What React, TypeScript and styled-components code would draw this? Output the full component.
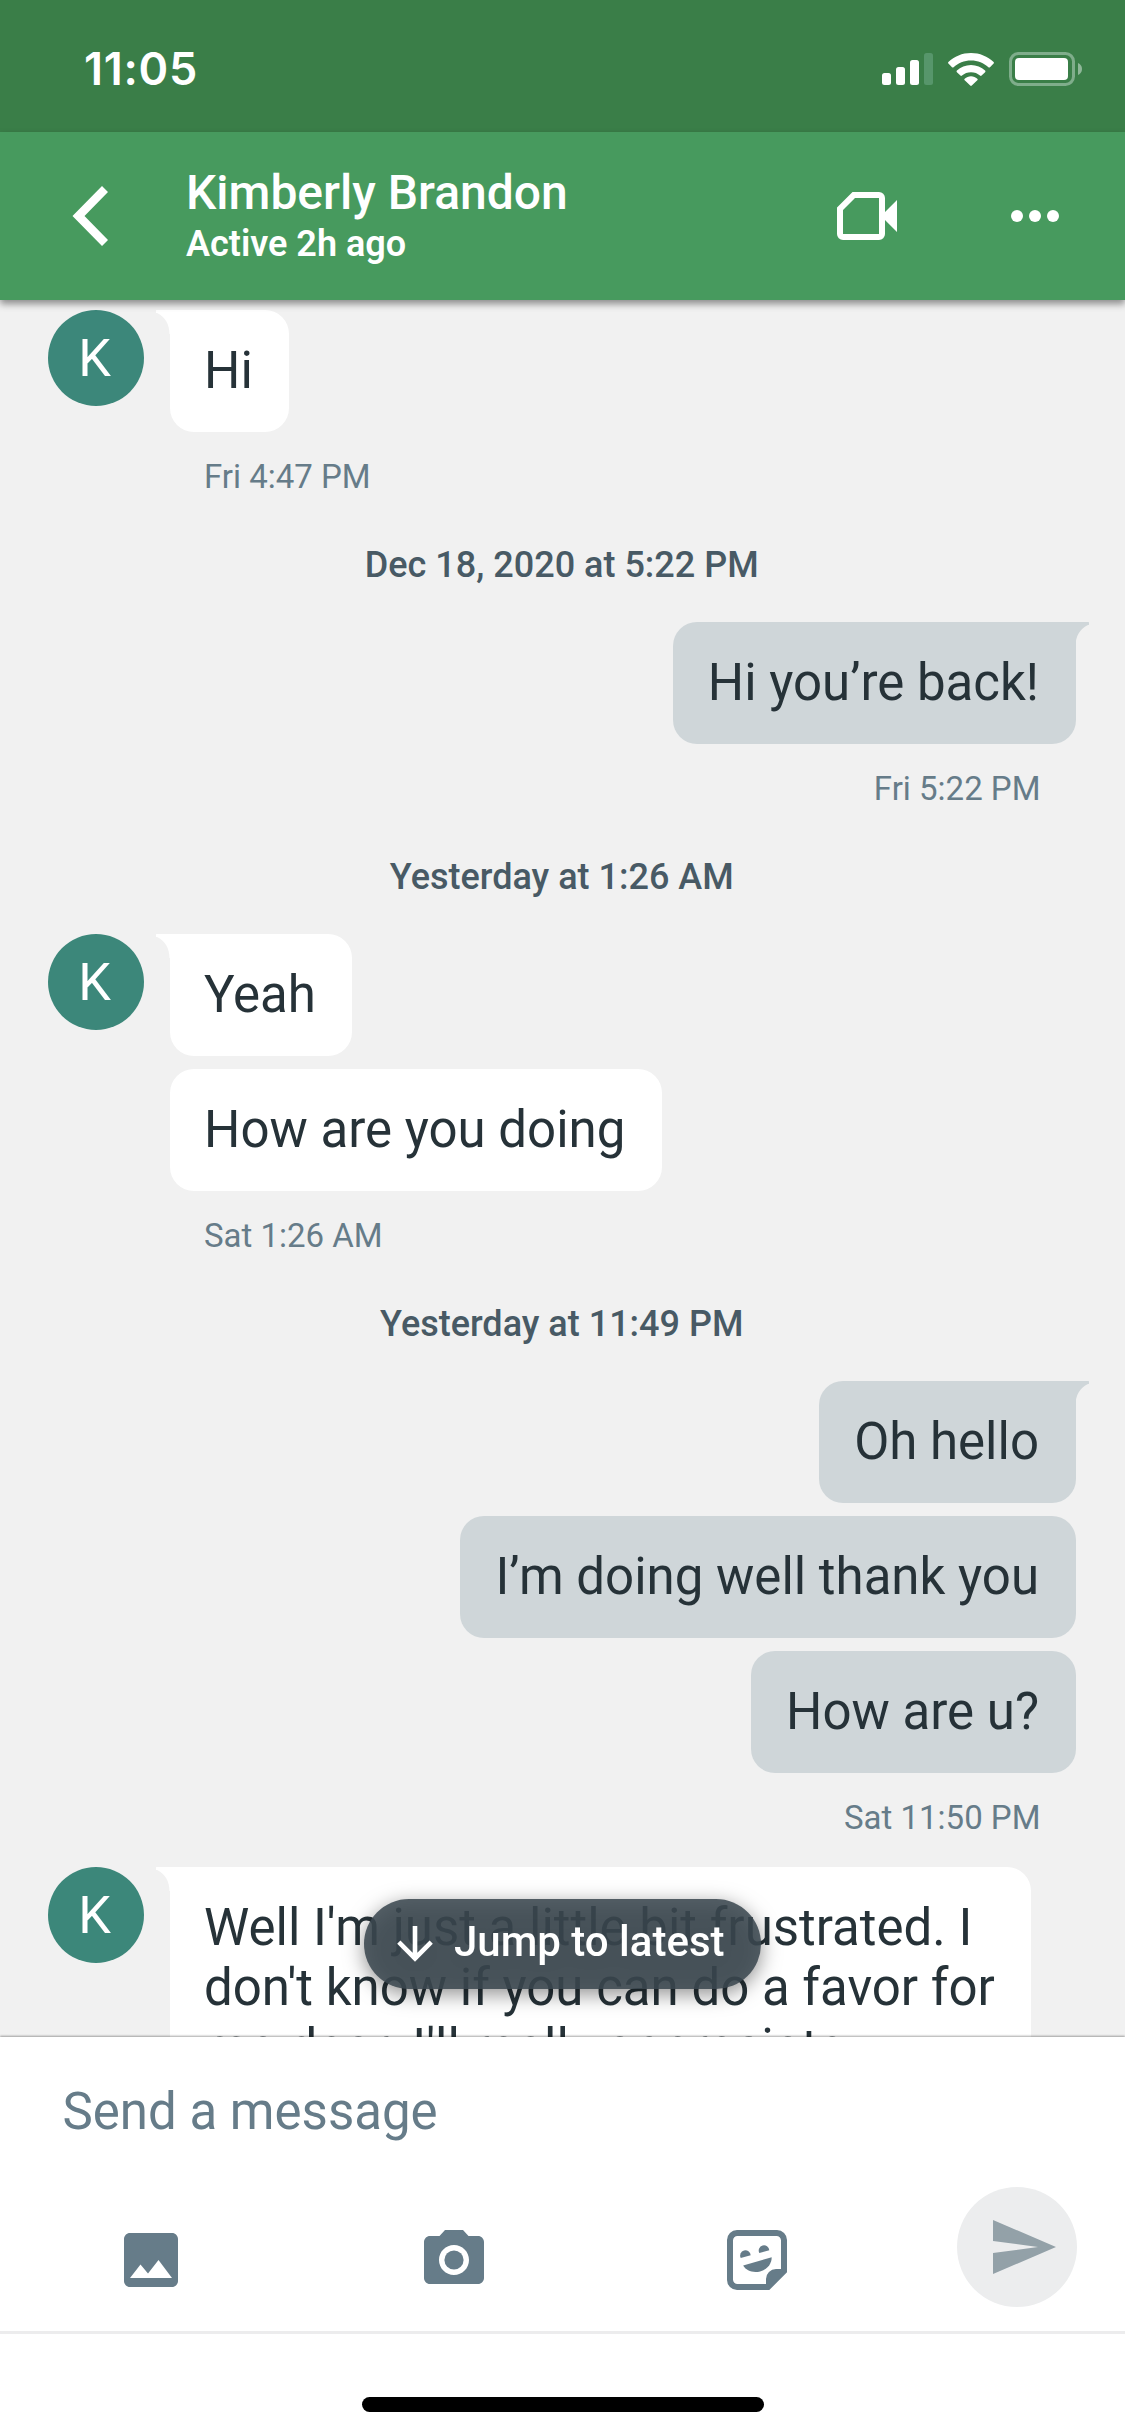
import React from "react";
import styled, { createGlobalStyle, css } from "styled-components";

const GlobalStyle = createGlobalStyle`
  *, *::before, *::after { box-sizing: border-box; }
  html, body { margin: 0; padding: 0; }
  body { width: 1125px; height: 2436px; overflow: hidden; background: #fff; }
  button, input { font: inherit; border: 0; padding: 0; margin: 0; background: none; }
  svg { display: block; flex: none; }
`;

const Screen = styled.div`
  width: 1125px;
  height: 2436px;
  display: flex;
  flex-direction: column;
  overflow: hidden;
  background: #fff;
  font-family: Roboto, "Liberation Sans", sans-serif;
`;

const StatusBar = styled.header`
  flex: none;
  height: 132px;
  padding: 6px 43px 0 84px;
  display: flex;
  align-items: center;
  justify-content: space-between;
  background: #3a7e48;
`;

const Clock = styled.time`
  color: #fff;
  font-family: Inter, Roboto, sans-serif;
  font-weight: 600;
  font-size: 45px;
  line-height: 54px;
  letter-spacing: 0.7px;
`;

const StatusIcons = styled.div`
  display: flex;
  align-items: center;
  gap: 15px;
`;

const ChatHeader = styled.div`
  position: relative;
  z-index: 2;
  flex: none;
  height: 168px;
  padding: 0 66px 0 72px;
  display: flex;
  align-items: center;
  background: #479a5e;
  box-shadow: 0 4px 7px rgba(0, 0, 0, 0.42);
`;

const IconButton = styled.button`
  display: flex;
  flex: none;
`;

const Contact = styled.div`
  flex: 1;
  margin-left: 78px;
  color: #fff;
`;

const ContactName = styled.h1`
  margin: 0;
  font-size: 48px;
  font-weight: 500;
  line-height: 56px;
`;

const ContactStatus = styled.p`
  margin: 0;
  font-size: 36px;
  font-weight: 600;
  line-height: 46px;
`;

const HeaderActions = styled.div`
  display: flex;
  align-items: center;
  gap: 114px;
`;

const Thread = styled.main`
  position: relative;
  flex: none;
  height: 1737px;
  padding: 10px 49.5px 0 48px;
  overflow: hidden;
  background: #f1f1f1;
`;

const Group = styled.section<{ $mine?: boolean }>`
  display: flex;
  align-items: flex-start;
  justify-content: ${(p) => (p.$mine ? "flex-end" : "flex-start")};
`;

const Avatar = styled.div`
  flex: none;
  width: 96px;
  height: 96px;
  margin-right: 25.5px;
  padding: 2px 3px 0 0;
  border-radius: 50%;
  display: flex;
  align-items: center;
  justify-content: center;
  background: #3c877a;
  color: #fff;
  font-size: 52px;
  line-height: 60px;
`;

const Stack = styled.div<{ $mine?: boolean }>`
  display: flex;
  flex-direction: column;
  align-items: ${(p) => (p.$mine ? "flex-end" : "flex-start")};
  gap: 13.5px;
`;

const BubbleBox = styled.div<{ $mine?: boolean; $first?: boolean }>`
  position: relative;
  max-width: 861px;
  padding: 30.6px 36.5px 30.5px ${(p) => (p.$mine ? "35px" : "34.5px")};
  border-radius: 24px;
  background: ${(p) => (p.$mine ? "#cfd6d9" : "#fff")};
  color: #263238;
  font-size: 51px;
  line-height: 60.4px;
  white-space: pre;
  ${(p) =>
    p.$first &&
    (p.$mine
      ? css`border-top-right-radius: 0;`
      : css`border-top-left-radius: 0;`)}
`;

const Tail = styled.svg<{ $mine?: boolean }>`
  position: absolute;
  top: 0;
  ${(p) => (p.$mine ? "right: -13.5px; transform: scaleX(-1);" : "left: -13.5px;")}
  fill: ${(p) => (p.$mine ? "#cfd6d9" : "#fff")};
`;

const SentAt = styled.div`
  height: 81px;
  padding: 12px 35px 0 34.5px;
  color: #667c89;
  font-size: 33px;
  line-height: 39px;
`;

const DayDivider = styled.div`
  height: 96px;
  padding-top: 18px;
  text-align: center;
  color: #485a65;
  font-size: 36px;
  font-weight: 500;
  line-height: 42px;
`;

const JumpButton = styled.button`
  position: absolute;
  left: 364px;
  top: 1599px;
  width: 397px;
  height: 90px;
  padding: 0 0 1px 33px;
  border-radius: 45px;
  display: flex;
  align-items: center;
  gap: 21px;
  background: rgba(60, 72, 80, 0.87);
  filter: drop-shadow(0 5px 10px rgba(0, 0, 0, 0.5));
  color: #fff;
  font-size: 42px;
  font-weight: 500;
  line-height: 48px;
  white-space: nowrap;
`;

const JumpLabel = styled.span`
  margin-top: -3px;
`;

const Composer = styled.section`
  position: relative;
  z-index: 1;
  flex: none;
  height: 297px;
  display: flex;
  flex-direction: column;
  background: #fff;
  border-bottom: 3px solid #ececed;
  box-shadow: 0 -1px 2px rgba(0, 0, 0, 0.35);
`;

const MessageField = styled.div`
  height: 150px;
  padding: 45px 62.5px 0;
  color: #667c89;
  font-size: 51px;
  line-height: 60px;
`;

const Toolbar = styled.div`
  display: flex;
  height: 144px;
`;

const Tools = styled.div`
  flex: none;
  width: 909px;
  display: grid;
  grid-template-columns: repeat(3, 303px);
  justify-items: center;
  align-content: start;
  padding-top: 37px;
  margin-left: -0.5px;
`;

const SendSlot = styled.div`
  flex: 1;
  display: flex;
  justify-content: center;
`;

const SendButton = styled.button`
  width: 120px;
  height: 120px;
  border-radius: 50%;
  display: flex;
  align-items: center;
  padding: 0 0 0 30px;
  background: #ecedee;
`;

const HomeArea = styled.footer`
  position: relative;
  z-index: 1;
  flex: 1;
  display: flex;
  justify-content: center;
  align-items: flex-end;
  padding-bottom: 24px;
  background: #fff;
`;

const HomeBar = styled.div`
  width: 402px;
  height: 15px;
  border-radius: 8px;
  background: #000;
`;

const SignalIcon = () => (
  <svg width="51" height="32" viewBox="0 0 51 32" fill="#fff">
    <rect x="0" y="20" width="9" height="12" rx="2.5" />
    <rect x="14" y="14" width="9" height="18" rx="2.5" />
    <rect x="28" y="7" width="9" height="25" rx="2.5" />
    <rect x="42" y="0" width="9" height="32" rx="2.5" fill="#57966b" />
  </svg>
);

const WifiIcon = () => (
  <svg width="46" height="33" viewBox="0 0 46 33" fill="#fff">
    <path d="M23 0C14.300 0 6.300 3.400.4 9a1.200 1.200 0 0 0 0 1.600L4 14.200a1.200 1.200 0 0 0 1.600 0C10.100 9.800 16.200 7.400 23 7.400s12.900 2.400 17.400 6.800a1.200 1.200 0 0 0 1.600 0l3.600-3.600a1.200 1.200 0 0 0 0-1.600C39.700 3.400 31.700 0 23 0Z" />
    <path d="M23 12c-5.400 0-10.400 2.100-14.100 5.500a1.200 1.200 0 0 0 0 1.700l3.500 3.400a1.200 1.200 0 0 0 1.600 0c2.400-2.100 5.500-3.300 9-3.300s6.600 1.200 9 3.300a1.200 1.200 0 0 0 1.600 0l3.500-3.400a1.200 1.200 0 0 0 0-1.700C33.400 14.100 28.400 12 23 12Z" />
    <path d="M23 23.300c-2.400 0-4.600.9-6.300 2.400a1.100 1.100 0 0 0 0 1.600l5.500 5.300a1.200 1.200 0 0 0 1.600 0l5.500-5.300a1.100 1.100 0 0 0 0-1.600c-1.700-1.500-3.900-2.400-6.300-2.400Z" />
  </svg>
);

const BatteryIcon = () => (
  <svg width="73" height="34" viewBox="0 0 73 34">
    <rect x="1.500" y="1.500" width="63" height="31" rx="8" fill="none" stroke="#7fad8b" strokeWidth="3" />
    <rect x="6" y="6" width="53" height="22" rx="4" fill="#fff" />
    <path d="M69 11c2.600 1 4 3.400 4 6s-1.400 5-4 6Z" fill="#8fb799" />
  </svg>
);

const BackIcon = () => (
  <svg width="36" height="60" viewBox="0 0 36 60" fill="#fff">
    <path d="M30 0 36 6 12.500 30 36 54 30 60 0.500 30Z" />
  </svg>
);

const VideoIcon = () => (
  <svg width="60" height="48" viewBox="0 0 60 48" fill="#fff">
    <path
      fillRule="evenodd"
      d="M15.500 0H42a6 6 0 0 1 6 6v14L60 8v32L48 28v14a6 6 0 0 1-6 6H6a6 6 0 0 1-6-6V15.500ZM18 6 6 18v24h36V6Z"
    />
  </svg>
);

const MoreIcon = () => (
  <svg width="48" height="12" viewBox="0 0 48 12" fill="#fff">
    <circle cx="6" cy="6" r="6" />
    <circle cx="24" cy="6" r="6" />
    <circle cx="42" cy="6" r="6" />
  </svg>
);

const ArrowDownIcon = () => (
  <svg width="36" height="36" viewBox="0 0 36 36" fill="none" stroke="#fff" strokeWidth="4.600">
    <path d="M18 0V32M1.800 16.200 18 32.400 34.200 16.200" />
  </svg>
);

const PhotoIcon = () => (
  <svg width="72" height="72" viewBox="0 0 24 24" fill="#667c89">
    <path d="M21 19V5c0-1.100-.9-2-2-2H5c-1.100 0-2 .9-2 2v14c0 1.100.9 2 2 2h14c1.100 0 2-.9 2-2zM8.500 13.500l2.500 3.010L14.500 12l4.500 6H5l3.500-4.500z" />
  </svg>
);

const CameraIcon = () => (
  <svg width="72" height="72" viewBox="0 0 24 24" fill="#667c89">
    <circle cx="12" cy="12" r="3.200" />
    <path d="M9 2L7.170 4H4c-1.100 0-2 .9-2 2v12c0 1.100.9 2 2 2h16c1.100 0 2-.9 2-2V6c0-1.100-.9-2-2-2h-3.170L15 2H9zm3 15c-2.760 0-5-2.240-5-5s2.240-5 5-5 5 2.240 5 5-2.240 5-5 5z" />
  </svg>
);

const StickerIcon = () => (
  <svg width="72" height="72" viewBox="-6 -6 72 72" fill="#667c89">
    <path
      fillRule="evenodd"
      d="M10 0H50A10 10 0 0 1 60 10V42.300L42.300 60H10A10 10 0 0 1 0 50V10A10 10 0 0 1 10 0ZM10.500 6A4.500 4.500 0 0 0 6 10.500V49.500A4.500 4.500 0 0 0 10.500 54H39V49A10 10 0 0 1 49 39H54V10.500A4.500 4.500 0 0 0 49.500 6Z"
    />
    <path d="M13.700 28A5.300 5.300 0 1 1 23.700 25.200Z" />
    <path d="M32.300 23A5.300 5.300 0 1 1 42.300 20.200Z" />
    <path d="M16.200 35.600 44.700 27.300C44.700 35 38.500 42 28.500 42 23 42 18.500 39.500 16.200 35.600Z" />
  </svg>
);

const SendIcon = () => (
  <svg width="72" height="72" viewBox="0 0 24 24" fill="#93a1a8">
    <path d="M2.010 21L23 12 2.010 3 2 10l15 2-15 2z" />
  </svg>
);

type Entry =
  | { kind: "messages"; mine?: boolean; texts: string[]; sentAt?: string }
  | { kind: "day"; label: string };

const entries: Entry[] = [
  { kind: "messages", texts: ["Hi"], sentAt: "Fri 4:47 PM" },
  { kind: "day", label: "Dec 18, 2020 at 5:22 PM" },
  { kind: "messages", mine: true, texts: ["Hi you’re back!"], sentAt: "Fri 5:22 PM" },
  { kind: "day", label: "Yesterday at 1:26 AM" },
  { kind: "messages", texts: ["Yeah", "How are you doing"], sentAt: "Sat 1:26 AM" },
  { kind: "day", label: "Yesterday at 11:49 PM" },
  {
    kind: "messages",
    mine: true,
    texts: ["Oh hello", "I’m doing well thank you", "How are u?"],
    sentAt: "Sat 11:50 PM",
  },
  {
    kind: "messages",
    texts: [
      "Well I'm just a little bit frustrated. I\ndon't know if you can do a favor for\nme dear. I'll really appreciate",
    ],
  },
];

function Bubble({ mine, first, text }: { mine?: boolean; first: boolean; text: string }) {
  return (
    <BubbleBox $mine={mine} $first={first}>
      {first && (
        <Tail $mine={mine} width="14" height="24" viewBox="0 0 14 24">
          <path d="M1 0H14V24H13.500C13.500 14.500 9 6.500 1 3A1.500 1.500 0 0 1 1 0Z" />
        </Tail>
      )}
      {text}
    </BubbleBox>
  );
}

export default function App() {
  return (
    <>
      <GlobalStyle />
      <Screen>
        <StatusBar>
          <Clock>11:05</Clock>
          <StatusIcons>
            <SignalIcon />
            <WifiIcon />
            <BatteryIcon />
          </StatusIcons>
        </StatusBar>
        <ChatHeader>
          <IconButton aria-label="Back">
            <BackIcon />
          </IconButton>
          <Contact>
            <ContactName>Kimberly Brandon</ContactName>
            <ContactStatus>Active 2h ago</ContactStatus>
          </Contact>
          <HeaderActions>
            <IconButton aria-label="Video call">
              <VideoIcon />
            </IconButton>
            <IconButton aria-label="More">
              <MoreIcon />
            </IconButton>
          </HeaderActions>
        </ChatHeader>
        <Thread>
          {entries.map((entry, i) =>
            entry.kind === "day" ? (
              <DayDivider key={i}>{entry.label}</DayDivider>
            ) : (
              <Group key={i} $mine={entry.mine}>
                {!entry.mine && <Avatar>K</Avatar>}
                <Stack $mine={entry.mine}>
                  {entry.texts.map((text, n) => (
                    <Bubble key={text} mine={entry.mine} first={n === 0} text={text} />
                  ))}
                  {entry.sentAt && <SentAt>{entry.sentAt}</SentAt>}
                </Stack>
              </Group>
            )
          )}
          <JumpButton>
            <ArrowDownIcon />
            <JumpLabel>Jump to latest</JumpLabel>
          </JumpButton>
        </Thread>
        <Composer>
          <MessageField>Send a message</MessageField>
          <Toolbar>
            <Tools>
              <IconButton aria-label="Photo">
                <PhotoIcon />
              </IconButton>
              <IconButton aria-label="Camera">
                <CameraIcon />
              </IconButton>
              <IconButton aria-label="Sticker">
                <StickerIcon />
              </IconButton>
            </Tools>
            <SendSlot>
              <SendButton aria-label="Send">
                <SendIcon />
              </SendButton>
            </SendSlot>
          </Toolbar>
        </Composer>
        <HomeArea>
          <HomeBar />
        </HomeArea>
      </Screen>
    </>
  );
}
